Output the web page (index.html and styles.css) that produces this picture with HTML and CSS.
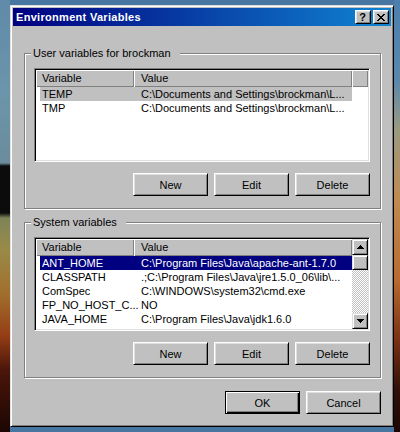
FILE: index.html
```html
<!DOCTYPE html>
<html>
<head>
<meta charset="utf-8">
<title>Environment Variables</title>
<link rel="stylesheet" href="styles.css">
</head>
<body>
<div class="window">
  <div class="titlebar">
    <span class="title">Environment Variables</span>
    <div class="tbtns">
      <div class="tbtn help">?</div>
      <div class="tbtn close">
        <svg width="8" height="7" viewBox="0 0 8 7" shape-rendering="crispEdges" fill="#000">
          <rect x="0" y="0" width="2" height="1"/><rect x="6" y="0" width="2" height="1"/>
          <rect x="1" y="1" width="2" height="1"/><rect x="5" y="1" width="2" height="1"/>
          <rect x="2" y="2" width="4" height="1"/>
          <rect x="3" y="3" width="2" height="1"/>
          <rect x="2" y="4" width="4" height="1"/>
          <rect x="1" y="5" width="2" height="1"/><rect x="5" y="5" width="2" height="1"/>
          <rect x="0" y="6" width="2" height="1"/><rect x="6" y="6" width="2" height="1"/>
        </svg>
      </div>
    </div>
  </div>
  <div class="content">
    <div class="group">
      <span class="glabel">User variables for brockman</span>
      <div class="list">
        <div class="lmain">
          <div class="header">
            <div class="hc c1">Variable</div>
            <div class="hc c2">Value</div>
          </div>
          <div class="row inactive"><span>TEMP</span><span>C:\Documents and Settings\brockman\L...</span></div>
          <div class="row"><span>TMP</span><span>C:\Documents and Settings\brockman\L...</span></div>
        </div>
        <div class="hc hfill"></div>
      </div>
      <div class="btnrow">
        <div class="btn">New</div>
        <div class="btn">Edit</div>
        <div class="btn">Delete</div>
      </div>
    </div>

    <div class="group g2">
      <span class="glabel">System variables</span>
      <div class="list">
        <div class="lmain">
          <div class="header">
            <div class="hc c1">Variable</div>
            <div class="hc c2">Value</div>
          </div>
          <div class="row sel"><span>ANT_HOME</span><span>C:\Program Files\Java\apache-ant-1.7.0</span></div>
          <div class="row"><span>CLASSPATH</span><span>.;C:\Program Files\Java\jre1.5.0_06\lib\...</span></div>
          <div class="row"><span>ComSpec</span><span>C:\WINDOWS\system32\cmd.exe</span></div>
          <div class="row"><span>FP_NO_HOST_C...</span><span>NO</span></div>
          <div class="row"><span>JAVA_HOME</span><span>C:\Program Files\Java\jdk1.6.0</span></div>
        </div>
        <div class="sb">
          <div class="sbbtn">
            <svg width="7" height="4" viewBox="0 0 7 4" shape-rendering="crispEdges" fill="#000">
              <rect x="3" y="0" width="1" height="1"/><rect x="2" y="1" width="3" height="1"/>
              <rect x="1" y="2" width="5" height="1"/><rect x="0" y="3" width="7" height="1"/>
            </svg>
          </div>
          <div class="thumb"></div>
          <div class="track"></div>
          <div class="sbbtn">
            <svg width="7" height="4" viewBox="0 0 7 4" shape-rendering="crispEdges" fill="#000">
              <rect x="0" y="0" width="7" height="1"/><rect x="1" y="1" width="5" height="1"/>
              <rect x="2" y="2" width="3" height="1"/><rect x="3" y="3" width="1" height="1"/>
            </svg>
          </div>
        </div>
      </div>
      <div class="btnrow">
        <div class="btn">New</div>
        <div class="btn">Edit</div>
        <div class="btn">Delete</div>
      </div>
    </div>

    <div class="dlgbtns">
      <div class="btn default">OK</div>
      <div class="btn">Cancel</div>
    </div>
  </div>
</div>
</body>
</html>
```

FILE: styles.css
```css
* { box-sizing: border-box; }

html, body { margin: 0; }

body {
  width: 400px;
  height: 432px;
  overflow: hidden;
  padding: 5px 6px 5px 10px;
  font: 11px/14px "Liberation Sans", Arial, sans-serif;
  color: #000;
  background:
    linear-gradient(to bottom, #5f8aa8 0, #6c95ab 90px, #6a8c9c 163px, #0c0c0c 166px, #0c0c0c 213px, #7e8458 218px, #9a8a48 250px, #a06e2c 295px, #963e16 335px, #4a160a 370px, #1c0604 432px) left top / 10px 432px no-repeat,
    linear-gradient(to bottom, #4d7fae 0, #5a88ac 80px, #9a9a80 130px, #c08a50 200px, #b86a30 280px, #7a3014 340px, #301008 390px, #1c0604 432px) right top / 6px 432px no-repeat,
    #4776a3;
}

.window {
  width: 384px;
  height: 422px;
  background: #c0c0c0;
  border: 1px solid;
  border-color: #dfdfdf #000 #000 #dfdfdf;
  box-shadow: inset 1px 1px #fff, inset -1px -1px #808080;
  padding: 2px;
  display: flex;
  flex-direction: column;
}

.titlebar {
  flex: none;
  height: 18px;
  background: linear-gradient(to right, #000080, #1084d0);
  display: flex;
  align-items: center;
  padding-left: 3px;
  line-height: 18px;
}

.title {
  color: #fff;
  font-weight: bold;
  letter-spacing: 0.3px;
}

.tbtns {
  margin-left: auto;
  margin-right: 2px;
  display: flex;
  gap: 2px;
}

.tbtn {
  width: 16px;
  height: 14px;
  background: #c0c0c0;
  border: 1px solid;
  border-color: #fff #000 #000 #fff;
  box-shadow: inset 1px 1px #dfdfdf, inset -1px -1px #808080;
  display: flex;
  align-items: center;
  justify-content: center;
  font-weight: bold;
  font-size: 11px;
  line-height: 12px;
  color: #000;
}

.tbtn.help { padding-right: 1px; }
.tbtn.close svg { display: block; margin-left: -1px; }

.content {
  flex: 1;
  display: flex;
  flex-direction: column;
  padding: 27px 10px 10px 11px;
}

.group {
  position: relative;
  width: 357px;
  height: 156px;
  border: 1px solid #808080;
  box-shadow: inset 1px 1px #fff, 1px 1px #fff;
  padding: 14px 9px 0 9px;
}

.group.g2 { margin-top: 13px; }

.glabel {
  position: absolute;
  top: -8px;
  left: 6px;
  padding: 0 9px 0 2px;
  background: #c0c0c0;
  white-space: nowrap;
}

.list {
  width: 336px;
  height: 94px;
  border: 1px solid;
  border-color: #808080 #fff #fff #808080;
  box-shadow: inset 1px 1px #000, inset -1px -1px #dfdfdf;
  padding: 1px;
  background: #fff;
  display: flex;
}

.lmain { width: 316px; flex: none; }

.header { display: flex; height: 17px; }

.hc {
  background: #c0c0c0;
  box-shadow: inset 1px 1px #fff, inset -1px -1px #808080;
  height: 17px;
  line-height: 17px;
  white-space: nowrap;
}

.hc.c1 { width: 98px; padding-left: 6px; }
.hc.c2 { width: 218px; padding-left: 7px; }
.hc.hfill { width: 16px; flex: none; }

.row {
  display: grid;
  grid-template-columns: 99px 213px;
  margin-left: 4px;
  height: 14px;
  line-height: 14px;
}

.row span {
  padding-left: 2px;
  white-space: nowrap;
  overflow: hidden;
}

.row.inactive { background: #c0c0c0; }
.row.sel { background: #000080; color: #fff; }

.sb {
  width: 16px;
  flex: none;
  display: flex;
  flex-direction: column;
  background-image: conic-gradient(#fff 25%, #c0c0c0 0 50%, #fff 0 75%, #c0c0c0 0);
  background-size: 2px 2px;
}

.sbbtn, .thumb {
  flex: none;
  background: #c0c0c0;
  border: 1px solid;
  border-color: #dfdfdf #000 #000 #dfdfdf;
  box-shadow: inset 1px 1px #fff, inset -1px -1px #808080;
}

.sbbtn {
  height: 16px;
  display: flex;
  align-items: center;
  justify-content: center;
}

.sbbtn svg { display: block; }

.thumb { height: 15px; }
.track { flex: 1; }

.btnrow {
  width: 336px;
  margin-top: 11px;
  display: flex;
  justify-content: flex-end;
  gap: 6px;
}

.btn {
  width: 75px;
  height: 23px;
  background: #c0c0c0;
  border: 1px solid;
  border-color: #fff #000 #000 #fff;
  box-shadow: inset 1px 1px #dfdfdf, inset -1px -1px #808080;
  display: flex;
  align-items: center;
  justify-content: center;
  line-height: 14px;
}

.btn.default {
  border-color: #000;
  box-shadow: inset 1px 1px #fff, inset -1px -1px #000, inset -2px -2px #808080;
}

.dlgbtns {
  margin-top: 13px;
  display: flex;
  justify-content: flex-end;
  gap: 6px;
}
```
